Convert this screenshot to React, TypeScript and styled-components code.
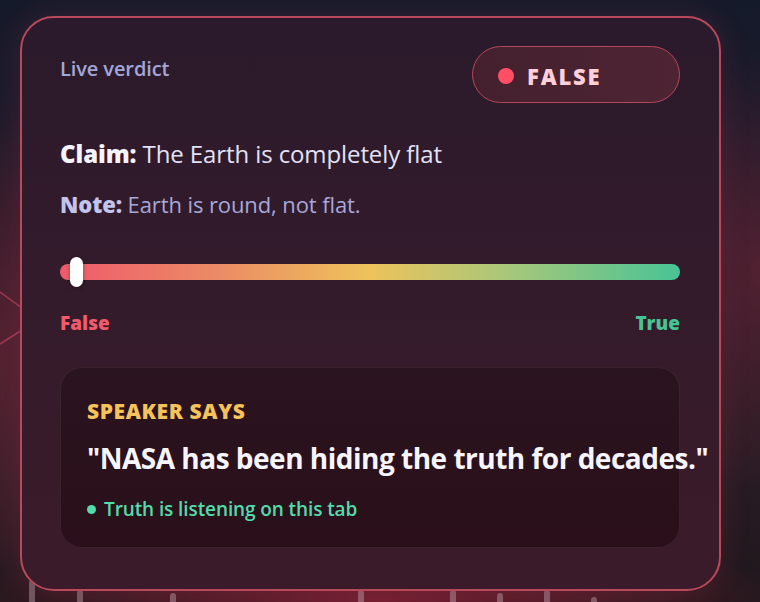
import styled, { createGlobalStyle } from 'styled-components';

const GlobalStyle = createGlobalStyle`
  html, body {
    margin: 0;
    padding: 0;
    width: 760px;
    height: 602px;
    overflow: hidden;
  }
  body {
    font-family: 'Open Sans', 'Noto Sans', sans-serif;
    background: #151828;
  }
`;

const Stage = styled.div`
  position: relative;
  width: 760px;
  height: 602px;
  overflow: hidden;
  box-sizing: border-box;
  padding: 16px 40px 0 20px;
  background:
    radial-gradient(ellipse 420px 70px at 50% 100%, rgba(130, 32, 52, 0.85), transparent 100%),
    radial-gradient(ellipse 120px 260px at 0% 60%, rgba(110, 38, 58, 0.6), transparent 100%),
    radial-gradient(ellipse 120px 220px at 100% 45%, rgba(110, 38, 58, 0.55), transparent 100%),
    linear-gradient(180deg, #151a2a 0%, #1c1a2a 20%, #2c1a26 45%, #2a1c24 75%, #1e171c 100%);
`;

const Backdrop = styled.svg`
  position: absolute;
  inset: 0;
  width: 760px;
  height: 602px;
  pointer-events: none;
`;

const Card = styled.section`
  position: relative;
  box-sizing: border-box;
  width: 701px;
  height: 575px;
  border: 2px solid #b8495b;
  border-radius: 34px;
  padding: 28px 39px 0 38px;
  background: linear-gradient(180deg, #2a1a2b 0%, #331b2b 45%, #3b1b29 100%);
  box-shadow: 0 0 30px rgba(200, 60, 90, 0.2);
`;

const Header = styled.div`
  display: flex;
  justify-content: space-between;
  align-items: flex-start;
`;

const Eyebrow = styled.span`
  margin-top: 10px;
  font-size: 20px;
  line-height: 26px;
  font-weight: 600;
  color: #a3a6d8;
  letter-spacing: -0.1px;
`;

const Pill = styled.div`
  box-sizing: border-box;
  width: 208px;
  height: 57px;
  display: flex;
  align-items: center;
  gap: 13px;
  padding: 2px 0 0 25px;
  border: 1.5px solid #b5475a;
  border-radius: 29px;
  background: linear-gradient(90deg, #44202f 0%, #4e2433 100%);
`;

const Dot = styled.span<{ $color: string; $size: number }>`
  width: ${(p) => p.$size}px;
  height: ${(p) => p.$size}px;
  border-radius: 50%;
  background: ${(p) => p.$color};
  flex: none;
`;

const PillLabel = styled.span`
  font-size: 22px;
  line-height: 28px;
  font-weight: 800;
  letter-spacing: 1.8px;
  color: #ffd0d9;
`;

const Line = styled.p<{ $top: number; $size: number; $height: number; $color: string }>`
  margin: ${(p) => p.$top}px 0 0;
  font-size: ${(p) => p.$size}px;
  line-height: ${(p) => p.$height}px;
  color: ${(p) => p.$color};
  letter-spacing: -0.1px;
`;

const Strong = styled.b<{ $color: string }>`
  font-weight: 800;
  color: ${(p) => p.$color};
`;

const Meter = styled.div`
  position: relative;
  margin-top: 45px;
  height: 16px;
  border-radius: 8px;
  background: linear-gradient(
    90deg,
    #ee5a6b 0%,
    #ec8a66 25%,
    #eec25b 50%,
    #a8c77a 72%,
    #49c396 100%
  );
`;

const Thumb = styled.span`
  position: absolute;
  left: 10px;
  top: -7px;
  width: 13px;
  height: 30px;
  border-radius: 7px;
  background: #ffffff;
  box-shadow: 0 1px 4px rgba(0, 0, 0, 0.35);
`;

const Scale = styled.div`
  display: flex;
  justify-content: space-between;
  margin-top: 31px;
`;

const ScaleLabel = styled.span<{ $color: string }>`
  font-size: 19px;
  line-height: 24px;
  font-weight: 800;
  color: ${(p) => p.$color};
`;

const Quote = styled.div`
  box-sizing: border-box;
  margin-top: 32px;
  height: 181px;
  padding: 30px 26px 0 26px;
  border-radius: 22px;
  border: 1px solid rgba(255, 255, 255, 0.07);
  background: linear-gradient(180deg, #2a141f 0%, #2a0f1a 100%);
`;

const QuoteTag = styled.div`
  font-size: 21px;
  line-height: 26px;
  font-weight: 800;
  color: #f6c35b;
  letter-spacing: 0.6px;
`;

const QuoteText = styled.div`
  margin-top: 16px;
  font-size: 28px;
  line-height: 36px;
  font-weight: 700;
  color: #f7f5ff;
  white-space: nowrap;
  letter-spacing: -0.5px;
`;

const Status = styled.div`
  display: flex;
  align-items: center;
  gap: 8px;
  margin-top: 20px;
  font-size: 19px;
  line-height: 26px;
  font-weight: 600;
  color: #52dcab;
  letter-spacing: -0.1px;
`;

const bars = [
  { x: 29, top: 580 },
  { x: 77, top: 590 },
  { x: 170, top: 593 },
  { x: 358, top: 590 },
  { x: 450, top: 590 },
  { x: 497, top: 593 },
  { x: 544, top: 590 },
  { x: 591, top: 597 },
];

export default function App() {
  return (
    <>
      <GlobalStyle />
      <Stage>
        <Backdrop viewBox="0 0 760 602">
          <path d="M0 292 L22 308" stroke="#9b3a52" strokeWidth="1.5" fill="none" />
          <path d="M0 344 L22 330" stroke="#9b3a52" strokeWidth="1.5" fill="none" />
          {bars.map((b) => (
            <rect
              key={b.x}
              x={b.x}
              y={b.top}
              width="6"
              height={610 - b.top}
              rx="3"
              fill="rgba(205, 185, 195, 0.4)"
            />
          ))}
        </Backdrop>
        <Card>
          <Header>
            <Eyebrow>Live verdict</Eyebrow>
            <Pill>
              <Dot $color="#ff4f64" $size={16} />
              <PillLabel>FALSE</PillLabel>
            </Pill>
          </Header>
          <Line $top={35} $size={24} $height={32} $color="#e4e2f6">
            <Strong $color="#f4f3ff">Claim:</Strong> The Earth is completely flat
          </Line>
          <Line $top={19} $size={22} $height={30} $color="#a7a8d8">
            <Strong $color="#c3c4ec">Note:</Strong> Earth is round, not flat.
          </Line>
          <Meter>
            <Thumb />
          </Meter>
          <Scale>
            <ScaleLabel $color="#f05a6d">False</ScaleLabel>
            <ScaleLabel $color="#47c496">True</ScaleLabel>
          </Scale>
          <Quote>
            <QuoteTag>SPEAKER SAYS</QuoteTag>
            <QuoteText>"NASA has been hiding the truth for decades."</QuoteText>
            <Status>
              <Dot $color="#52dcab" $size={9} />
              Truth is listening on this tab
            </Status>
          </Quote>
        </Card>
      </Stage>
    </>
  );
}
